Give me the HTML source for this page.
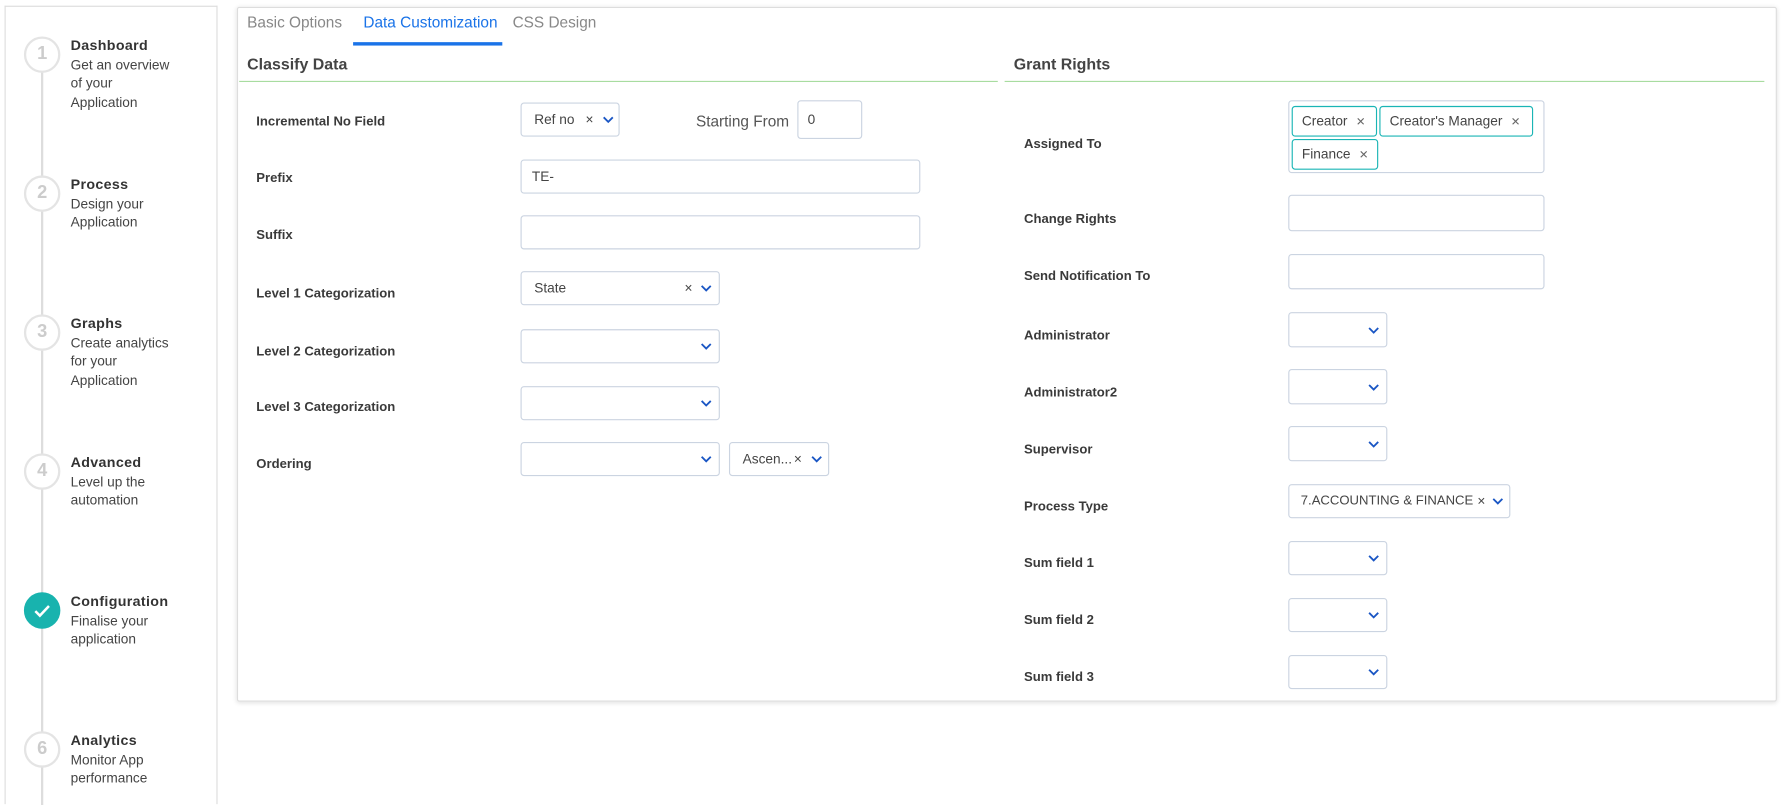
<!DOCTYPE html>
<html><head><meta charset="utf-8"><style>
html,body{margin:0;padding:0;background:#fff;overflow:hidden;width:1786px;height:787px}
#w{position:absolute;left:0;top:0;width:1568px;height:691px;transform:scale(1.13903);transform-origin:0 0;font-family:"Liberation Sans",sans-serif;color:#333}
.a{position:absolute}
.side{left:4px;top:5px;width:185px;height:700px;border:1px solid #ddd;border-bottom:none}
.vl{left:36px;top:47px;width:2px;height:660px;background:#ddd}
.c{width:28px;height:28px;border:2px solid #e4e4e4;border-radius:50%;background:#fff;color:#ccc;font-size:16px;font-weight:bold;text-align:center;line-height:28px}
.st{left:62px;font-size:12px;line-height:16.5px;color:#444}
.st b{color:#333;letter-spacing:.3px;font-size:12.5px}
.card{left:208px;top:6px;width:1350px;height:608px;border:1px solid #ddd;box-shadow:0 1px 4px rgba(0,0,0,.12);border-radius:2px}
.tab{top:12px;font-size:13.5px;color:#888}
.h{font-size:14px;font-weight:bold;color:#444}
.gl{height:1px;background:#a8dca0}
.lb{font-size:11.5px;font-weight:bold;color:#3a3a3a}
.in{border:1px solid #cbd4e1;border-radius:3px;background:#fff;box-sizing:border-box;font-size:12px;color:#444}
.in span{position:absolute;top:50%;transform:translateY(-50%)}
.ch{position:absolute;top:50%;margin-top:-3px;width:10px;height:7px}
.tag{border:1px solid #1ab5b5;border-radius:3px;box-sizing:border-box;font-size:12px;color:#444;line-height:25px;padding-left:8px}
</style></head><body><div id="w">
<div class="a side"></div>
<div class="a vl"></div>
<div class="a c" style="left:21px;top:32px">1</div>
<div class="a c" style="left:21px;top:154px">2</div>
<div class="a c" style="left:21px;top:276px">3</div>
<div class="a c" style="left:21px;top:398px">4</div>
<div class="a c" style="left:21px;top:520px;background:#18b3ae;border-color:#18b3ae"><svg width="28" height="28" viewBox="0 0 28 28"><path d="M8 14.5l4 4 8-8.5" fill="none" stroke="#fff" stroke-width="2.2"/></svg></div>
<div class="a c" style="left:21px;top:642px">6</div>
<div class="a st" style="top:32px"><b>Dashboard</b><br>Get an overview<br>of your<br>Application</div>
<div class="a st" style="top:154px"><b>Process</b><br>Design your<br>Application</div>
<div class="a st" style="top:276px"><b>Graphs</b><br>Create analytics<br>for your<br>Application</div>
<div class="a st" style="top:398px"><b>Advanced</b><br>Level up the<br>automation</div>
<div class="a st" style="top:520px"><b>Configuration</b><br>Finalise your<br>application</div>
<div class="a st" style="top:642px"><b>Analytics</b><br>Monitor App<br>performance</div>

<div class="a card"></div>
<div class="a tab" style="left:217px">Basic Options</div>
<div class="a tab" style="left:319px;color:#1a73e8">Data Customization</div>
<div class="a" style="left:310px;top:37px;width:131px;height:3px;background:#1a73e8"></div>
<div class="a tab" style="left:450px">CSS Design</div>
<div class="a h" style="left:217px;top:48px">Classify Data</div>
<div class="a gl" style="left:210px;top:71px;width:666px"></div>
<div class="a h" style="left:890px;top:48px">Grant Rights</div>
<div class="a gl" style="left:882px;top:71px;width:667px"></div>

<div class="a lb" style="left:225px;top:101px">Incremental No Field</div>
<div class="a lb" style="left:225px;top:151px">Prefix</div>
<div class="a lb" style="left:225px;top:201px">Suffix</div>
<div class="a lb" style="left:225px;top:252px">Level 1 Categorization</div>
<div class="a lb" style="left:225px;top:303px">Level 2 Categorization</div>
<div class="a lb" style="left:225px;top:352px">Level 3 Categorization</div>
<div class="a lb" style="left:225px;top:402px">Ordering</div>

<div class="a in" style="left:457px;top:90px;width:87px;height:30px"><span style="left:11px">Ref no</span><span style="left:56px">×</span><svg class="ch" style="left:71px" viewBox="0 0 10 7"><path d="M1 1l4 4 4-4" fill="none" stroke="#1a56c4" stroke-width="1.6"/></svg></div>
<div class="a" style="left:611px;top:99px;font-size:13.5px;color:#555">Starting From</div>
<div class="a in" style="left:700px;top:88px;width:57px;height:34px"><span style="left:8px">0</span></div>
<div class="a in" style="left:457px;top:140px;width:351px;height:30px"><span style="left:9px">TE-</span></div>
<div class="a in" style="left:457px;top:189px;width:351px;height:30px"></div>
<div class="a in" style="left:457px;top:238px;width:175px;height:30px"><span style="left:11px">State</span><span style="left:143px">×</span><svg class="ch" style="left:157px" viewBox="0 0 10 7"><path d="M1 1l4 4 4-4" fill="none" stroke="#1a56c4" stroke-width="1.6"/></svg></div>
<div class="a in" style="left:457px;top:289px;width:175px;height:30px"><svg class="ch" style="left:157px" viewBox="0 0 10 7"><path d="M1 1l4 4 4-4" fill="none" stroke="#1a56c4" stroke-width="1.6"/></svg></div>
<div class="a in" style="left:457px;top:339px;width:175px;height:30px"><svg class="ch" style="left:157px" viewBox="0 0 10 7"><path d="M1 1l4 4 4-4" fill="none" stroke="#1a56c4" stroke-width="1.6"/></svg></div>
<div class="a in" style="left:457px;top:388px;width:175px;height:30px"><svg class="ch" style="left:157px" viewBox="0 0 10 7"><path d="M1 1l4 4 4-4" fill="none" stroke="#1a56c4" stroke-width="1.6"/></svg></div>
<div class="a in" style="left:640px;top:388px;width:88px;height:30px"><span style="left:11px">Ascen...</span><span style="left:56px">×</span><svg class="ch" style="left:71px" viewBox="0 0 10 7"><path d="M1 1l4 4 4-4" fill="none" stroke="#1a56c4" stroke-width="1.6"/></svg></div>

<div class="a lb" style="left:899px;top:121px">Assigned To</div>
<div class="a lb" style="left:899px;top:187px">Change Rights</div>
<div class="a lb" style="left:899px;top:237px">Send Notification To</div>
<div class="a lb" style="left:899px;top:289px">Administrator</div>
<div class="a lb" style="left:899px;top:339px">Administrator2</div>
<div class="a lb" style="left:899px;top:389px">Supervisor</div>
<div class="a lb" style="left:899px;top:439px">Process Type</div>
<div class="a lb" style="left:899px;top:489px">Sum field 1</div>
<div class="a lb" style="left:899px;top:539px">Sum field 2</div>
<div class="a lb" style="left:899px;top:589px">Sum field 3</div>

<div class="a in" style="left:1131px;top:88px;width:225px;height:64px"></div>
<div class="a tag" style="left:1134px;top:93px;width:75px;height:27px">Creator <span style="font-size:10px;margin-left:4px;color:#666">✕</span></div>
<div class="a tag" style="left:1211px;top:93px;width:135px;height:27px">Creator's Manager <span style="font-size:10px;margin-left:4px;color:#666">✕</span></div>
<div class="a tag" style="left:1134px;top:122px;width:76px;height:27px">Finance <span style="font-size:10px;margin-left:4px;color:#666">✕</span></div>
<div class="a in" style="left:1131px;top:171px;width:225px;height:32px"></div>
<div class="a in" style="left:1131px;top:223px;width:225px;height:31px"></div>
<div class="a in" style="left:1131px;top:274px;width:87px;height:31px"><svg class="ch" style="left:69px" viewBox="0 0 10 7"><path d="M1 1l4 4 4-4" fill="none" stroke="#1a56c4" stroke-width="1.6"/></svg></div>
<div class="a in" style="left:1131px;top:324px;width:87px;height:31px"><svg class="ch" style="left:69px" viewBox="0 0 10 7"><path d="M1 1l4 4 4-4" fill="none" stroke="#1a56c4" stroke-width="1.6"/></svg></div>
<div class="a in" style="left:1131px;top:374px;width:87px;height:31px"><svg class="ch" style="left:69px" viewBox="0 0 10 7"><path d="M1 1l4 4 4-4" fill="none" stroke="#1a56c4" stroke-width="1.6"/></svg></div>
<div class="a in" style="left:1131px;top:425px;width:195px;height:30px"><span style="left:10px;font-size:11.5px">7.ACCOUNTING &amp; FINANCE</span><span style="left:165px">×</span><svg class="ch" style="left:178px" viewBox="0 0 10 7"><path d="M1 1l4 4 4-4" fill="none" stroke="#1a56c4" stroke-width="1.6"/></svg></div>
<div class="a in" style="left:1131px;top:475px;width:87px;height:30px"><svg class="ch" style="left:69px" viewBox="0 0 10 7"><path d="M1 1l4 4 4-4" fill="none" stroke="#1a56c4" stroke-width="1.6"/></svg></div>
<div class="a in" style="left:1131px;top:525px;width:87px;height:30px"><svg class="ch" style="left:69px" viewBox="0 0 10 7"><path d="M1 1l4 4 4-4" fill="none" stroke="#1a56c4" stroke-width="1.6"/></svg></div>
<div class="a in" style="left:1131px;top:575px;width:87px;height:30px"><svg class="ch" style="left:69px" viewBox="0 0 10 7"><path d="M1 1l4 4 4-4" fill="none" stroke="#1a56c4" stroke-width="1.6"/></svg></div>
</div></body></html>
